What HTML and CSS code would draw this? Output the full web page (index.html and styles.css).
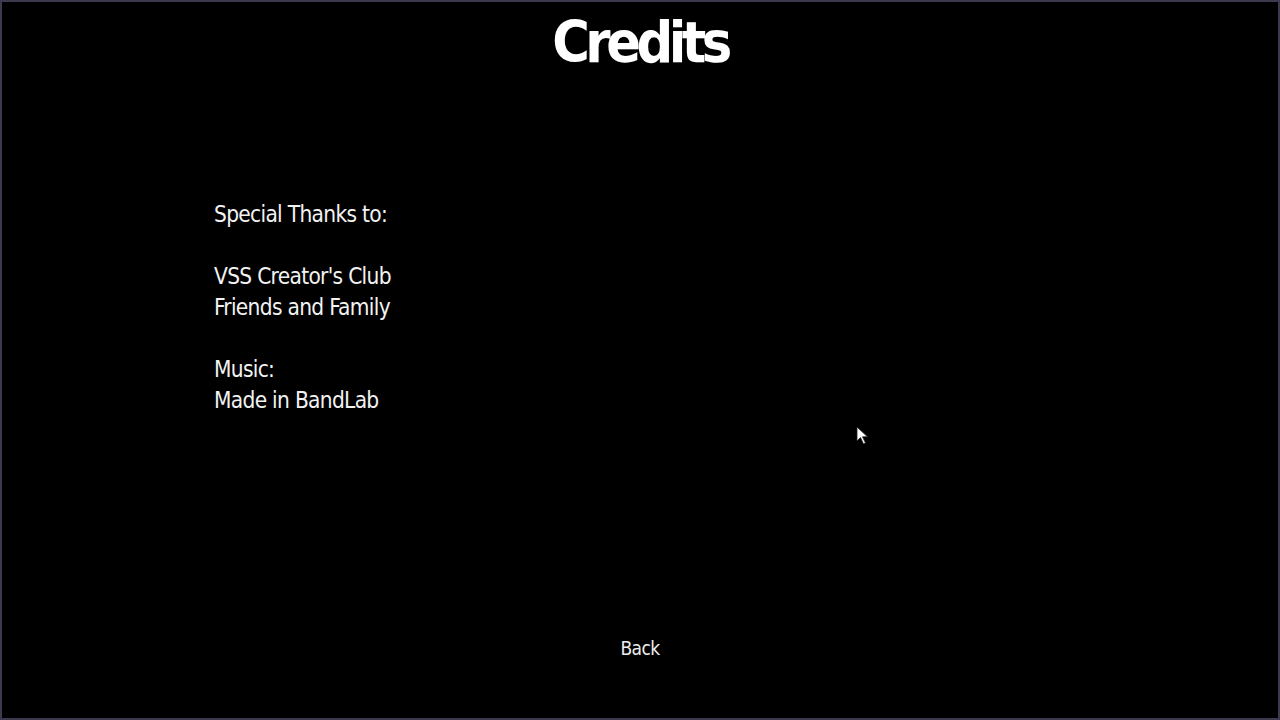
FILE: index.html
```html
<!DOCTYPE html>
<html lang="en">
<head>
<meta charset="utf-8">
<title>Credits</title>
<link rel="stylesheet" href="styles.css">
</head>
<body>
<div class="screen">
  <h1 class="title">Credits</h1>
  <div class="credits">
    <p>Special Thanks to:</p>
    <p class="gap">VSS Creator's Club<br>Friends and Family</p>
    <p class="gap">Music:<br>Made in BandLab</p>
  </div>
  <div class="back">Back</div>
  <svg class="cursor" width="14" height="20" viewBox="0 0 14 20">
    <path d="M1 1 L1 15 L4.5 11.5 L7.5 18 L9.5 17 L6.5 10.8 L11.5 10.8 Z" fill="#fff" stroke="#222" stroke-width="0.8"/>
  </svg>
</div>
</body>
</html>
```

FILE: styles.css
```css
html, body {
  margin: 0;
  padding: 0;
  background: #000;
}
.screen {
  position: relative;
  box-sizing: border-box;
  width: 1280px;
  height: 720px;
  border: 2px solid #3a3a4c;
  background: #000;
  color: #f2f2f2;
  font-family: "DejaVu Sans Condensed", "Liberation Sans", sans-serif;
  display: flex;
  flex-direction: column;
}
.title {
  margin: 9px 0 0;
  text-align: center;
  font-size: 57px;
  line-height: 62px;
  font-weight: bold;
  letter-spacing: -4.5px;
  color: #fff;
}
.credits {
  margin: 126px 0 0 212px;
  font-size: 22.5px;
  line-height: 31px;
  letter-spacing: -0.7px;
  flex: 1;
}
.credits p {
  margin: 0;
}
.credits .gap {
  margin-top: 31px;
}
.back {
  text-align: center;
  font-size: 19px;
  line-height: 26px;
  letter-spacing: -0.6px;
  color: #ececec;
  margin-bottom: 57px;
}
.cursor {
  position: absolute;
  left: 854px;
  top: 424px;
}
```
